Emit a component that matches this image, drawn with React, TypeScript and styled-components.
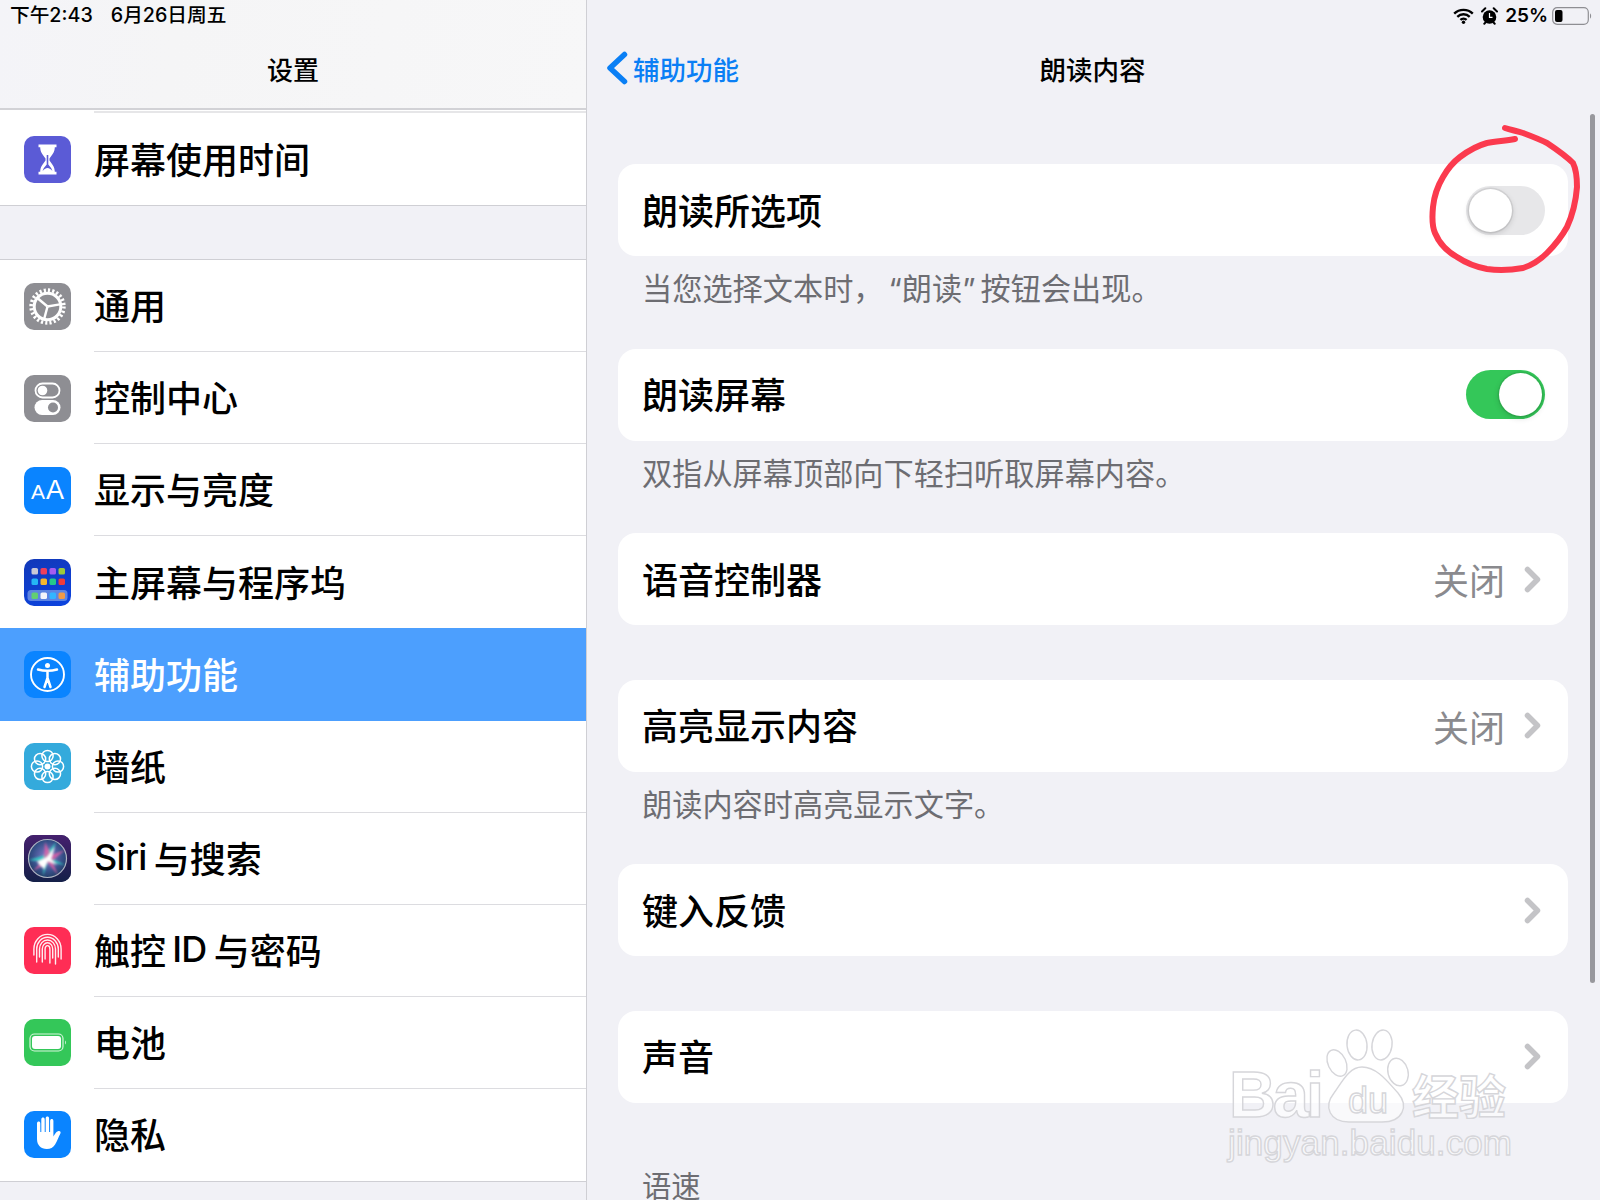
import React from "react";
import styled, { createGlobalStyle } from "styled-components";

const FONT = `Inter, "Noto Sans CJK SC", "Noto Sans", sans-serif`;

const GlobalStyle = createGlobalStyle`
  html, body { margin: 0; padding: 0; background: #f1f1f6; }
  body { font-family: ${FONT}; color: #000; }
  * { box-sizing: border-box; }
`;

const Screen = styled.div`
  position: relative;
  display: flex;
  width: 1600px;
  height: 1200px;
  overflow: hidden;
  background: #f1f1f6;
`;

const Sidebar = styled.div`
  width: 587px;
  flex-shrink: 0;
  border-right: 1px solid #cfcfd4;
  display: flex;
  flex-direction: column;
`;

const SideHeader = styled.div`
  height: 110px;
  flex-shrink: 0;
  background: linear-gradient(100deg, #f4f4f8 0%, #f5f5f6 30%, #f7f7f8 100%);
  border-bottom: 2px solid #d2d2d6;
`;

const StatusLeft = styled.div`
  height: 31px;
  padding-left: 10px;
  display: flex;
  gap: 18px;
  font-size: 19.7px;
  line-height: 31px;
  font-weight: 500;
`;

const SideTitle = styled.div`
  height: 78px;
  padding-top: 2px;
  line-height: 76px;
  text-align: center;
  font-size: 26px;
  font-weight: 500;
`;

const SideGroup = styled.div<{ $gap?: number }>`
  background: #fff;
  margin-top: ${(p) => p.$gap ?? 0}px;
  border-top: ${(p) => (p.$gap ? "1px solid #cfcfd4" : "none")};
  border-bottom: 1px solid #cfcfd4;
`;

const TopInset = styled.div`
  height: 3px;
  margin-left: 94px;
  border-bottom: 2px solid #e6e6e8;
`;

const Row = styled.div<{ $active?: boolean }>`
  height: 92.1px;
  display: flex;
  align-items: center;
  padding-left: 24px;
  gap: 23px;
  background: ${(p) => (p.$active ? "#4c9ffe" : "#fff")};
  color: ${(p) => (p.$active ? "#fff" : "#000")};
`;

const IconTile = styled.div<{ $bg: string }>`
  width: 47px;
  height: 47px;
  flex-shrink: 0;
  border-radius: 10px;
  background: ${(p) => p.$bg};
  display: flex;
  align-items: center;
  justify-content: center;
  overflow: hidden;
  color: #fff;
`;

const AaMark = styled.span`
  font-family: "Liberation Sans", sans-serif;
  font-size: 27px;
  line-height: 1;
  small { font-size: 21px; margin-right: 1px; }
`;

const RowMain = styled.div<{ $line: boolean }>`
  flex: 1;
  height: 100%;
  display: flex;
  align-items: center;
  padding-bottom: 3px;
  font-size: 36px;
  font-weight: 500;
  border-bottom: ${(p) => (p.$line ? "1px solid #dcdce0" : "none")};
`;

const Latin = styled.span`
  letter-spacing: -0.8px;
  margin-right: 1px;
`;

const Detail = styled.div`
  flex: 1;
  min-width: 0;
  display: flex;
  flex-direction: column;
`;

const DetailHeader = styled.div`
  height: 110px;
  flex-shrink: 0;
`;

const StatusRight = styled.div`
  height: 31px;
  display: flex;
  align-items: center;
  justify-content: flex-end;
  gap: 7px;
  padding-right: 8px;
`;

const Percent = styled.span`
  font-size: 19px;
  font-weight: 600;
  margin-right: -3px;
`;

const NavBar = styled.div`
  height: 74px;
  display: grid;
  grid-template-columns: 1fr auto 1fr;
  align-items: center;
`;

const BackLink = styled.div`
  display: flex;
  align-items: center;
  gap: 5px;
  padding-left: 19px;
  font-size: 26.5px;
  color: #0a7ff5;
  font-weight: 500;
`;

const NavTitle = styled.div`
  font-size: 26.5px;
  font-weight: 500;
  margin-left: -2px;
`;

const Content = styled.div`
  padding: 54px 32px 0 31px;
`;

const Card = styled.div<{ $gapBelow?: number }>`
  height: 92px;
  background: #fff;
  border-radius: 18px;
  display: flex;
  align-items: center;
  justify-content: space-between;
  padding: 0 23px 0 24px;
  font-size: 36px;
  font-weight: 500;
  margin-bottom: ${(p) => p.$gapBelow ?? 0}px;
`;

const CardLabel = styled.span`
  margin-top: -3px;
`;

const Footnote = styled.div`
  height: 92.5px;
  padding: 13px 0 0 24px;
  font-size: 30.2px;
  line-height: 40px;
  color: #6d6d72;
`;

const QuoteOpen = styled.span`
  padding-left: 5px;
`;

const QuoteClose = styled.span`
  padding-right: 5px;
`;

const SliderLabel = styled.div`
  padding-left: 24px;
  font-size: 29.3px;
  line-height: 36px;
  margin-top: 66px;
  color: #6d6d72;
`;

const Toggle = styled.div<{ $on: boolean }>`
  position: relative;
  width: 79px;
  height: 49px;
  border-radius: 25px;
  background: ${(p) => (p.$on ? "#34c759" : "#e7e7e9")};
`;

const Knob = styled.div<{ $on: boolean }>`
  position: absolute;
  top: 3px;
  left: ${(p) => (p.$on ? "33px" : "3px")};
  width: 43px;
  height: 43px;
  border-radius: 50%;
  background: #fff;
  box-shadow: 0 2px 6px rgba(0, 0, 0, 0.16), 0 0 0 1.5px rgba(0, 0, 0, 0.07);
`;

const Trailing = styled.div`
  display: flex;
  align-items: center;
  gap: 19px;
  padding-right: 4px;
  color: #8a8a8e;
  font-weight: 400;
`;

const ScrollThumb = styled.div`
  position: absolute;
  left: 1590px;
  top: 114px;
  width: 5px;
  height: 869px;
  border-radius: 3px;
  background: #98989d;
`;

const Overlay = styled.svg`
  position: absolute;
  left: 0;
  top: 0;
  pointer-events: none;
`;

const Wm = styled.text`
  fill: rgba(255, 255, 255, 0.65);
  stroke: #d6d6da;
  stroke-width: 1.4px;
  font-family: "Liberation Sans", sans-serif;
`;

const WmBold = styled(Wm)`
  font-weight: 700;
`;

const WmCjk = styled(Wm)`
  font-family: "Noto Sans CJK SC", sans-serif;
  font-weight: 700;
`;

const Chevron = () => (
  <svg width="17" height="27" viewBox="0 0 17 27">
    <path d="M3.500 3.500 13.500 13.500 3.500 23.500" fill="none" stroke="#c4c4c7" strokeWidth="5.500" strokeLinecap="round" strokeLinejoin="round" />
  </svg>
);

const gearSpokes = [105, 220, 350];

const GearIcon = () => (
  <svg width="47" height="47" viewBox="0 0 47 47" fill="none" stroke="#fff">
    <circle cx="23.500" cy="23.500" r="16.400" strokeWidth="3.600" strokeDasharray="2.150 2.143" />
    <circle cx="23.500" cy="23.500" r="13.300" strokeWidth="3" />
    {gearSpokes.map((a) => (
      <line
        key={a}
        x1="23.500"
        y1="23.500"
        x2={23.5 + 12.5 * Math.cos((a * Math.PI) / 180)}
        y2={23.5 + 12.5 * Math.sin((a * Math.PI) / 180)}
        strokeWidth="2.400"
      />
    ))}
  </svg>
);

const HourglassIcon = () => (
  <svg width="47" height="47" viewBox="0 0 47 47">
    <path d="M14.500 8.500h18v2.800h-1.700c0 5-3 8-5.300 11.200v2c2.300 3.200 5.300 6.200 5.300 11.200h1.700v2.800h-18v-2.800h1.700c0-5 3-8 5.300-11.200v-2c-2.300-3.200-5.300-6.200-5.300-11.200h-1.700z" fill="#fff" />
    <path d="M22.700 19h1.600v9.500c1.500 1.800 3.600 3.800 4 6.500h-9.600c.4-2.700 2.500-4.700 4-6.500z" fill="#5b5bd6" />
    <path d="M18.800 35c.8-1.600 3-3 4.700-3s3.900 1.400 4.700 3z" fill="#fff" />
  </svg>
);

const SwitchesIcon = () => (
  <svg width="47" height="47" viewBox="0 0 47 47">
    <rect x="11.500" y="8.500" width="24" height="14" rx="7" fill="none" stroke="#fff" strokeWidth="1.800" />
    <circle cx="18.500" cy="15.500" r="4.800" fill="#fff" />
    <rect x="10.500" y="25" width="26" height="15" rx="7.500" fill="#fff" />
    <circle cx="29" cy="32.500" r="5" fill="#8e8e93" />
  </svg>
);

const dockColors = ["#62cf72", "#f5f5fa", "#32b5ff", "#f09a45"];
const gridColors = ["#c9c9d6", "#ee3f5d", "#a55cf0", "#9ccb3b", "#25b5f5", "#f5b82e", "#25c98a", "#ee3b3b"];

const HomeIcon = () => (
  <svg width="47" height="47" viewBox="0 0 47 47">
    {gridColors.map((c, i) => (
      <rect key={c} x={7.5 + (i % 4) * 9} y={9 + Math.floor(i / 4) * 10.5} width="6.500" height="6.500" rx="1.600" fill={c} />
    ))}
    <rect x="3.500" y="31" width="40" height="11" rx="3.500" fill="#7fa3e8" opacity="0.7" />
    {dockColors.map((c, i) => (
      <rect key={c} x={7.5 + i * 9} y="33.500" width="6.500" height="6.500" rx="1.600" fill={c} />
    ))}
  </svg>
);

const AccessIcon = () => (
  <svg width="47" height="47" viewBox="0 0 47 47" fill="none" stroke="#fff">
    <circle cx="23.500" cy="23.500" r="16.500" strokeWidth="1.900" />
    <circle cx="23.500" cy="14.500" r="2.500" fill="#fff" stroke="none" />
    <path d="M14 18.500c6 1.600 13 1.600 19 0M23.500 20v8M23.500 27l-3 9M23.500 27l3 9" strokeWidth="2.500" strokeLinecap="round" />
  </svg>
);

const petals = [0, 45, 90, 135, 180, 225, 270, 315];

const FlowerIcon = () => (
  <svg width="47" height="47" viewBox="0 0 47 47" fill="none" stroke="#fff" strokeWidth="1.500">
    {petals.map((a) => (
      <circle key={a} cx={23.5 + 10.5 * Math.cos((a * Math.PI) / 180)} cy={23.5 + 10.5 * Math.sin((a * Math.PI) / 180)} r="5.600" />
    ))}
    <circle cx="23.500" cy="23.500" r="3" fill="#fff" stroke="none" />
  </svg>
);

const SiriIcon = () => (
  <svg width="47" height="47" viewBox="0 0 47 47">
    <defs>
      <linearGradient id="siriBg" x1="0" y1="0" x2="0" y2="1">
        <stop offset="0" stopColor="#45206e" />
        <stop offset="1" stopColor="#142048" />
      </linearGradient>
      <radialGradient id="siriGlow" cx="0.500" cy="0.450" r="0.600">
        <stop offset="0" stopColor="#8a7fd0" />
        <stop offset="0.650" stopColor="#37508a" />
        <stop offset="1" stopColor="#1f3a5e" />
      </radialGradient>
      <filter id="siriBlur" x="-20%" y="-20%" width="140%" height="140%">
        <feGaussianBlur stdDeviation="0.900" />
      </filter>
    </defs>
    <rect width="47" height="47" fill="url(#siriBg)" />
    <circle cx="23.500" cy="23.500" r="19" fill="url(#siriGlow)" stroke="#b0b6c4" strokeWidth="1.200" />
    <g filter="url(#siriBlur)">
      <path d="M5 25 L21 20 L32 7 L27 23 L41 30 L24 27 L19 41 L20 27 Z" fill="#32d6c8" opacity="0.85" />
      <path d="M21 7 L27 20 L41 15 L28 26 L34 40 L24 28 L9 36 L20 24 Z" fill="#ef5fa6" opacity="0.75" />
      <path d="M13 27 L23 22 L31 12 L27 24 L33 30 L24 26 L20 34 Z" fill="#fff" />
    </g>
  </svg>
);

// arc radius plus how far each leg of a fingerprint ridge runs down
const ridges = [
  [2.4, 32, 36],
  [5.2, 35, 31],
  [8, 30, 37],
  [10.8, 35, 30],
  [13.6, 28, 32],
];

const FingerIcon = () => (
  <svg width="47" height="47" viewBox="0 0 47 47" fill="none" stroke="#fff" strokeWidth="1.400" strokeLinecap="round" opacity="0.92">
    {ridges.map(([r, left, right]) => (
      <path key={r} d={`M${23.5 - r} ${left}V22a${r} ${r + 1} 0 0 1 ${2 * r} 0V${right}`} />
    ))}
  </svg>
);

const BatteryTileIcon = () => (
  <svg width="47" height="47" viewBox="0 0 47 47">
    <rect x="6" y="15" width="33" height="17" rx="4.500" fill="none" stroke="#d6f5dc" strokeWidth="1.200" />
    <rect x="8" y="17" width="29" height="13" rx="3" fill="#fff" />
    <path d="M41 21.500c1.200.5 1.200 3.500 0 4z" fill="#d6f5dc" />
  </svg>
);

const HandIcon = () => (
  <svg width="47" height="47" viewBox="0 0 47 47">
    <path
      d="M13 23V12.500c0-2.600 3.300-2.600 3.300 0V21h1V8.500c0-2.600 3.400-2.600 3.400 0V21h1V7.500c0-2.600 3.400-2.600 3.400 0V21h1V10c0-2.600 3.300-2.600 3.300 0v15.500c1.200-2 2.500-4.400 4.500-5.200 2-.8 3.300.6 2.500 2.200-2 3.600-3 7.500-5.300 11-2 3-4.600 4.500-8.300 4.500-6 0-9.800-3.900-9.800-10z"
      fill="#fff"
    />
  </svg>
);

const WifiIcon = () => (
  <svg width="21" height="16" viewBox="0 0 21 16" fill="none" stroke="#000" strokeWidth="2.400">
    <path d="M1.200 5.600a13.400 13.400 0 0 1 18.600 0M4.300 8.800a9 9 0 0 1 12.400 0M7.400 11.900a4.600 4.600 0 0 1 6.200 0" />
    <circle cx="10.500" cy="14.300" r="1.700" fill="#000" stroke="none" />
  </svg>
);

const AlarmIcon = () => (
  <svg width="17" height="18" viewBox="0 0 17 18">
    <circle cx="8.500" cy="10" r="6.800" fill="#000" />
    <path d="M8.500 6v4.300h3" fill="none" stroke="#fff" strokeWidth="1.200" />
    <path d="M1 4.500 4.300 1.300M16 4.500 12.700 1.300M3.300 16.700l1.500-1.600M13.700 16.700l-1.500-1.600" stroke="#000" strokeWidth="2" strokeLinecap="round" />
  </svg>
);

const BatteryIcon = () => (
  <svg width="40" height="18" viewBox="0 0 40 18">
    <rect x="0.700" y="0.700" width="35.600" height="16.600" rx="4.500" fill="none" stroke="#8e8e93" strokeWidth="1.200" />
    <rect x="3" y="3" width="7.500" height="12" rx="2" fill="#000" />
    <path d="M38 6.500c1.500.5 1.500 4.500 0 5z" fill="#8e8e93" />
  </svg>
);

const SIDE_MAIN = [
  { key: "general", label: <>通用</>, bg: "#8e8e93", icon: <GearIcon /> },
  { key: "control", label: <>控制中心</>, bg: "#8e8e93", icon: <SwitchesIcon /> },
  {
    key: "display",
    label: <>显示与亮度</>,
    bg: "#0a84ff",
    icon: (
      <AaMark>
        <small>A</small>A
      </AaMark>
    ),
  },
  { key: "home", label: <>主屏幕与程序坞</>, bg: "linear-gradient(160deg, #1238b8, #0c44e0)", icon: <HomeIcon /> },
  { key: "access", label: <>辅助功能</>, bg: "#0a84ff", icon: <AccessIcon />, active: true },
  { key: "wall", label: <>墙纸</>, bg: "#34aadc", icon: <FlowerIcon /> },
  { key: "siri", label: <><Latin>Siri</Latin>{"\u2009"}与搜索</>, bg: "#1c2450", icon: <SiriIcon /> },
  { key: "touch", label: <>触控{"\u2009"}<Latin>ID</Latin>{"\u2009"}与密码</>, bg: "#ff2d55", icon: <FingerIcon /> },
  { key: "battery", label: <>电池</>, bg: "#34c759", icon: <BatteryTileIcon /> },
  { key: "privacy", label: <>隐私</>, bg: "#0a84ff", icon: <HandIcon /> },
];

const Value = ({ text }: { text?: string }) => (
  <Trailing>
    {text && <span>{text}</span>}
    <Chevron />
  </Trailing>
);

const App = () => {
  return (
    <Screen>
      <GlobalStyle />
      <Sidebar>
        <SideHeader>
          <StatusLeft>
            <span>下午2:43</span>
            <span>6月26日周五</span>
          </StatusLeft>
          <SideTitle>设置</SideTitle>
        </SideHeader>
        <SideGroup>
          <TopInset />
          <Row>
            <IconTile $bg="#5b5bd6">
              <HourglassIcon />
            </IconTile>
            <RowMain $line={false}>屏幕使用时间</RowMain>
          </Row>
        </SideGroup>
        <SideGroup $gap={53}>
          {SIDE_MAIN.map((r, i) => (
            <Row key={r.key} $active={r.active}>
              <IconTile $bg={r.bg}>{r.icon}</IconTile>
              <RowMain $line={!r.active && i < SIDE_MAIN.length - 1 && !SIDE_MAIN[i + 1].active}>{r.label}</RowMain>
            </Row>
          ))}
        </SideGroup>
      </Sidebar>

      <Detail>
        <DetailHeader>
          <StatusRight>
            <WifiIcon />
            <AlarmIcon />
            <Percent>25%</Percent>
            <BatteryIcon />
          </StatusRight>
          <NavBar>
            <BackLink>
              <svg width="22" height="34" viewBox="0 0 22 34">
                <path d="M18.500 3.500 4 17 18.500 30.500" fill="none" stroke="#0a7ff5" strokeWidth="5.500" strokeLinecap="round" strokeLinejoin="round" />
              </svg>
              辅助功能
            </BackLink>
            <NavTitle>朗读内容</NavTitle>
            <span />
          </NavBar>
        </DetailHeader>
        <Content>
          <Card>
            <CardLabel>朗读所选项</CardLabel>
            <Toggle $on={false}>
              <Knob $on={false} />
            </Toggle>
          </Card>
          <Footnote>
            当您选择文本时，<QuoteOpen>“</QuoteOpen>朗读<QuoteClose>”</QuoteClose>按钮会出现。
          </Footnote>
          <Card>
            <CardLabel>朗读屏幕</CardLabel>
            <Toggle $on>
              <Knob $on />
            </Toggle>
          </Card>
          <Footnote>双指从屏幕顶部向下轻扫听取屏幕内容。</Footnote>
          <Card $gapBelow={54.5}>
            <CardLabel>语音控制器</CardLabel>
            <Value text="关闭" />
          </Card>
          <Card>
            <CardLabel>高亮显示内容</CardLabel>
            <Value text="关闭" />
          </Card>
          <Footnote>朗读内容时高亮显示文字。</Footnote>
          <Card $gapBelow={54.5}>
            <CardLabel>键入反馈</CardLabel>
            <Value />
          </Card>
          <Card>
            <CardLabel>声音</CardLabel>
            <Value />
          </Card>
          <SliderLabel>语速</SliderLabel>
        </Content>
      </Detail>

      <ScrollThumb />

      <Overlay width="1600" height="1200" viewBox="0 0 1600 1200">
        <path
          d="M1515 139 C1505 141 1497 141 1487 143 C1476 146 1468 151 1460 157 C1452 163 1447 170 1443 177 C1437 187 1434 197 1433 207 C1432 217 1432 226 1435 233 C1440 245 1448 252 1457 257 C1466 263 1476 267 1487 269 C1500 271 1512 270 1523 268 C1533 265 1540 260 1547 253 C1555 245 1562 236 1567 227 C1573 214 1576 200 1577 187 C1577 176 1576 169 1573 163 C1565 155 1556 149 1547 143 C1539 139 1531 136 1523 133 C1517 131 1511 130 1505 128"
          fill="none"
          stroke="#fb3a4e"
          strokeWidth="6"
          strokeLinecap="round"
          strokeLinejoin="round"
        />
        <g fill="rgba(255,255,255,0.6)" stroke="#d6d6da" strokeWidth="1.400">
          <ellipse cx="1357" cy="1045" rx="10" ry="15" transform="rotate(-6 1357 1045)" />
          <ellipse cx="1382" cy="1045" rx="10" ry="15" transform="rotate(8 1382 1045)" />
          <ellipse cx="1337" cy="1063" rx="9" ry="14" transform="rotate(-25 1337 1063)" />
          <ellipse cx="1398" cy="1072" rx="10" ry="14" transform="rotate(-15 1398 1072)" />
          <path d="M1362 1067 C1349 1067 1342 1082 1334 1093 C1323 1107 1330 1122 1349 1122 L1382 1122 C1403 1122 1409 1106 1398 1093 C1388 1082 1377 1067 1362 1067 Z" />
        </g>
        <WmBold x="1229" y="1117" fontSize="65" textLength="95">Bai</WmBold>
        <Wm x="1348" y="1113" fontSize="36" textLength="40">du</Wm>
        <WmCjk x="1412" y="1114" fontSize="47">经验</WmCjk>
        <Wm x="1228" y="1155" fontSize="35" textLength="284">jingyan.baidu.com</Wm>
      </Overlay>
    </Screen>
  );
};

export default App;
